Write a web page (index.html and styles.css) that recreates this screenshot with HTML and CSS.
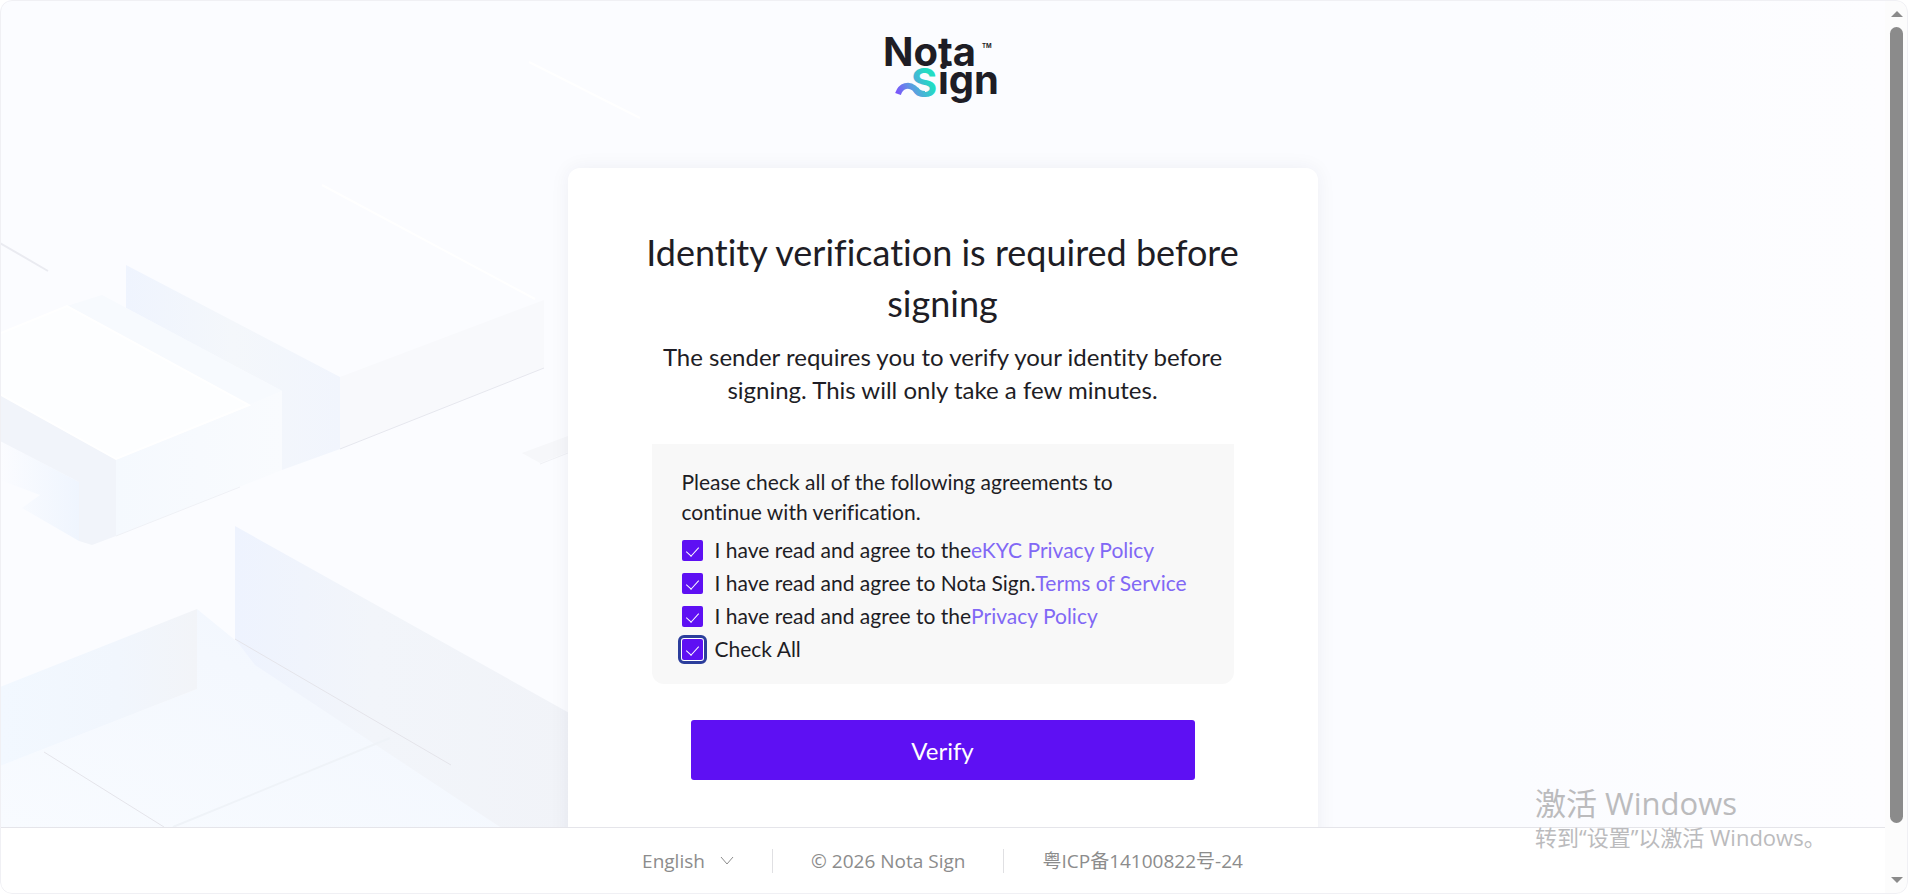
FILE: index.html
```html
<!DOCTYPE html>
<html lang="en">

<head>
  <meta charset="utf-8">
  <title>Nota Sign</title>
  <meta name="viewport" content="width=device-width, initial-scale=1">
  <link rel="stylesheet" href="styles.css">
</head>

<body>
  <div class="window">
    <div class="page">
      <main class="stage">
        <svg class="backdrop" viewBox="0 0 1885 827" preserveAspectRatio="xMinYMin slice" aria-hidden="true">
          <defs>
            <linearGradient id="sideA" x1="0" x2="1">
              <stop offset="0" stop-color="#eff4fe" />
              <stop offset=".5" stop-color="#f4f7fb" />
              <stop offset="1" stop-color="#f1f5fd" />
            </linearGradient>
            <linearGradient id="sideB" x1="0" x2="1">
              <stop offset="0" stop-color="#f5f9fe" />
              <stop offset="1" stop-color="#f9fbfe" />
            </linearGradient>
            <linearGradient id="sideC" x1="0" x2="1">
              <stop offset="0" stop-color="#eef3fe" />
              <stop offset=".4" stop-color="#f2f5fa" />
              <stop offset="1" stop-color="#f1f3f8" />
            </linearGradient>
            <linearGradient id="sideD" x1="0" x2="1">
              <stop offset="0" stop-color="#f2f8ff" />
              <stop offset=".6" stop-color="#f1f6fd" />
              <stop offset="1" stop-color="#f2f4f8" />
            </linearGradient>
            <linearGradient id="floor" x1="0" y1="1" x2="1" y2="0">
              <stop offset="0" stop-color="#f8fbff" />
              <stop offset=".6" stop-color="#f4f8fe" />
              <stop offset="1" stop-color="#f0f5fe" />
            </linearGradient>
            <linearGradient id="shade" x1="0" x2="1">
              <stop offset="0" stop-color="#fbfcff" />
              <stop offset="1" stop-color="#eff5fe" />
            </linearGradient>
            <linearGradient id="air" x1="0" x2="1">
              <stop offset="0" stop-color="#fbfcff" />
              <stop offset=".8" stop-color="#fbfcff" />
              <stop offset="1" stop-color="#fdfdff" />
            </linearGradient>
          </defs>
          <path fill="url(#air)" d="M0 0H1885V827H0z" />
          <!-- upper block -->
          <path fill="url(#sideA)" d="M126 265 340 377V449L282 470V391L126 308z" />
          <path fill="#f8f9fc" d="M340 377 544 300V368L340 449z" />
          <path stroke="#e6e7ee" d="M340 449 544 368" />
          <path stroke="#fff" stroke-width="2" d="M322 185 535 299M529 62 640 118" />
          <path stroke="#eaebf1" stroke-width="2" d="M0 243 48 271" />
          <!-- left block -->
          <path fill="#f7fafe" d="M67 306 102 295 282 391 249 405z" />
          <path fill="url(#sideB)" d="M116 459 282 391V470L116 536z" />
          <path fill="url(#shade)" d="M0 441 79 482V541L22 508 40 495 0 480z" />
          <path fill="#f1f4fa" d="M0 394 116 459V536L92 545 79 541V482L0 441z" />
          <path fill="#fdfeff" stroke="#fff" stroke-width="2" d="M-4 335 67 306 249 405 116 459-4 392z" />
          <path stroke="#eff1f6" d="M116 536 240 487" />
          <!-- lower blocks -->
          <path fill="url(#floor)" d="M197 609 235 640 500 827H0V766L197 689z" />
          <path fill="url(#sideD)" d="M0 687 197 609V689L0 766z" />
          <path fill="url(#sideC)" d="M235 526 580 719V827H500L255 665 235 639z" />
          <path stroke="#e4e4ea" d="M235 639 451 765M44 752 164 827" />
          <path stroke="#eff3f8" stroke-width="2" d="M173 827 390 738" />
          <path fill="#f6f7fa" d="M522 453 568 436V452L540 463z" />
          <path stroke="#f0f1f5" d="M540 464 568 453" />
        </svg>

        <header class="brand">
          <svg class="logo" viewBox="0 0 120 72" role="img" aria-label="Nota Sign">
            <defs>
              <linearGradient id="ribbon" gradientUnits="userSpaceOnUse" x1="12" y1="58" x2="46" y2="42">
                <stop offset="0" stop-color="#7f4bff" />
                <stop offset=".5" stop-color="#5b9fe0" />
                <stop offset="1" stop-color="#22dcc3" />
              </linearGradient>
            </defs>
            <text class="logo-word" x="0" y="30">Nota</text>
            <text class="logo-tm" x="99" y="12">TM</text>
            <text class="logo-word logo-s" x="28" y="61">S</text>
            <path fill="none" stroke="url(#ribbon)" stroke-width="6" d="M15 58C18 49 26 48 31 52 35 56 37 58 42 58" />
            <text class="logo-word" x="55" y="58">ign</text>
          </svg>
        </header>

        <form class="card" onsubmit="return false">
          <h1 class="title">Identity verification is required before signing</h1>
          <p class="desc">The sender requires you to verify your identity before signing. This will only take a few minutes.</p>
          <div class="agreements">
            <p class="hint">Please check all of the following agreements to continue with verification.</p>
            <div class="check-row">
              <input type="checkbox" id="ekyc" checked>
              <label for="ekyc">I have read and agree to the</label><a href="#">eKYC Privacy Policy</a>
            </div>
            <div class="check-row">
              <input type="checkbox" id="terms" checked>
              <label for="terms">I have read and agree to Nota Sign.</label><a href="#">Terms of Service</a>
            </div>
            <div class="check-row">
              <input type="checkbox" id="privacy" checked>
              <label for="privacy">I have read and agree to the</label><a href="#">Privacy Policy</a>
            </div>
            <div class="check-row">
              <input type="checkbox" id="all" class="focused" checked>
              <label for="all">Check All</label>
            </div>
          </div>
          <button class="verify" type="submit">Verify</button>
        </form>
      </main>

      <footer class="footer">
        <div class="footer-item language">
          <select class="lang-select" aria-label="Language">
            <option>English</option>
          </select>
          <svg class="chevron" viewBox="0 0 14 14" aria-hidden="true">
            <path d="M1 3 7 10 13 3" />
          </svg>
        </div>
        <div class="footer-item">© 2026 Nota Sign</div>
        <div class="footer-item"><a href="#">粤ICP备14100822号-24</a></div>
      </footer>
    </div>

    <div class="scrollbar" aria-hidden="true">
      <svg class="arrow" viewBox="0 0 12 6"><path d="M0 6 6 0 12 6z" /></svg>
      <div class="thumb"></div>
      <svg class="arrow" viewBox="0 0 12 6"><path d="M0 0 6 6 12 0z" /></svg>
    </div>

    <div class="activation">
      <p class="activation-title">激活 Windows</p>
      <p class="activation-text">转到“设置”以激活 Windows。</p>
    </div>
  </div>
</body>

</html>
```
FILE: styles.css
```css
* {
  margin: 0;
  padding: 0;
  box-sizing: border-box;
}

body {
  background: #fff;
  font-family: Lato, "Noto Sans CJK SC", sans-serif;
  font-variant-ligatures: none;
  color: #1e1d25;
}

a {
  color: inherit;
  text-decoration: none;
}

.window {
  position: relative;
  display: flex;
  height: 100vh;
  border-radius: 12px;
  overflow: hidden;
}
.window:after {
  content: '';
  position: absolute;
  inset: 0;
  border: 1px solid #f0f0f4;
  border-radius: 12px;
  pointer-events: none;
}

.page {
  flex: 1;
  display: flex;
  flex-direction: column;
  min-width: 0;
}

.stage {
  position: relative;
  flex: 1;
  min-height: 0;
  overflow: hidden;
  background: #fbfcff;
}
.backdrop {
  position: absolute;
  left: 0;
  top: 0;
  width: 100%;
  height: 100%;
}

.brand {
  position: relative;
  display: flex;
  justify-content: center;
  padding: 36px 0 60px;
}
.logo {
  display: block;
  width: 120px;
  height: 72px;
  overflow: visible;
}
.logo-word {
  font: 700 40px Inter, sans-serif;
  fill: #1e1d25;
}
.logo-s {
  fill: url(#ribbon);
}
.logo-tm {
  font: 700 6px Inter, sans-serif;
  fill: #1e1d25;
}

.card {
  position: relative;
  width: 750px;
  max-width: 100%;
  min-height: 720px;
  margin: 0 auto;
  padding: 59px 60px;
  border-radius: 12px;
  background: #fff;
  box-shadow: 0 0 20px rgba(30, 29, 60, .06);
}
.title {
  font-size: 36px;
  font-weight: 400;
  line-height: 51px;
  text-align: center;
}
.desc {
  margin-top: 11px;
  padding: 0 24px;
  font-size: 24px;
  line-height: 33px;
  text-align: center;
}

.agreements {
  width: 582px;
  max-width: 100%;
  margin: 38px auto 36px;
  padding: 23px 30px 19px;
  border-radius: 0 0 12px 12px;
  background: #f8f8f8;
  font-size: 21px;
}
.hint {
  margin-bottom: 6px;
  padding-right: 36px;
  line-height: 30px;
}
.check-row {
  display: flex;
  align-items: center;
  line-height: 33px;
  white-space: nowrap;
}
.check-row a {
  color: #8168f5;
}
.check-row input {
  appearance: none;
  position: relative;
  width: 21px;
  height: 21px;
  margin: 1px 12px 0 0;
  border-radius: 2px;
  background: #5e10f3;
}
.check-row input:checked:after {
  content: '';
  position: absolute;
  left: 7px;
  top: 4px;
  width: 6px;
  height: 11px;
  border: solid #fff;
  border-width: 0 1px 1px 0;
  transform: rotate(42deg);
}
.check-row .focused {
  outline: 3px solid #2c3e9c;
  outline-offset: 1px;
  box-shadow: 0 0 0 1px #fff;
}

.verify {
  display: block;
  width: 504px;
  max-width: 100%;
  height: 60px;
  margin: 0 auto;
  border: 0;
  border-radius: 3px;
  background: #5e10f3;
  font: 24px Lato, sans-serif;
  color: #fff;
  cursor: pointer;
}

.footer {
  display: flex;
  justify-content: center;
  align-items: center;
  height: 67px;
  border-top: 1px solid #e5e5ea;
  background: #fff;
  font-family: "Open Sans", "Noto Sans CJK SC", sans-serif;
  font-size: 19px;
  color: #8c8c8c;
}
.footer-item {
  padding: 0 38px;
  line-height: 24px;
}
.footer-item + .footer-item {
  border-left: 1px solid #e0e0e3;
}
.language {
  display: flex;
  align-items: center;
}
.lang-select {
  appearance: none;
  width: 78px;
  border: 0;
  background: none;
  font: inherit;
  color: inherit;
}
.chevron {
  width: 14px;
  height: 14px;
  fill: none;
  stroke: #8c8c8c;
}

.scrollbar {
  display: flex;
  flex-direction: column;
  align-items: center;
  width: 23px;
  padding: 11px 0;
  background: #fcfcfc;
}
.thumb {
  flex: 1;
  width: 13px;
  margin: 10px 0 54px;
  border-radius: 7px;
  background: #8b8b8b;
}
.arrow {
  width: 12px;
  height: 6px;
  fill: #8b8b8b;
}

/* system notice that floats above the page */
.activation {
  position: absolute;
  right: 81px;
  bottom: 41px;
  width: 292px;
  font-family: "Open Sans", "Noto Sans CJK SC", sans-serif;
  color: #bbbbbd;
  white-space: nowrap;
  pointer-events: none;
}
.activation-title {
  font-size: 31px;
  line-height: 36px;
}
.activation-text {
  font-size: 22px;
  line-height: 32px;
}
```
